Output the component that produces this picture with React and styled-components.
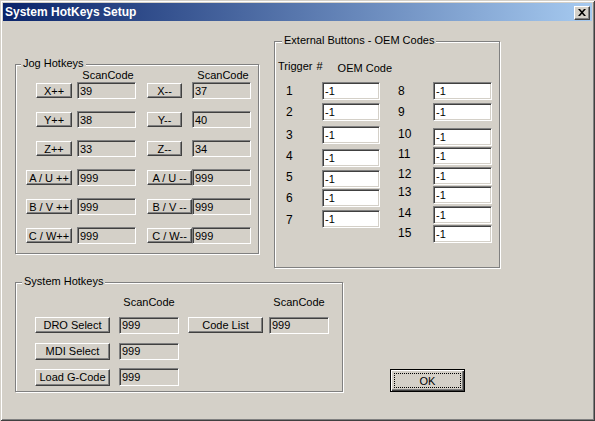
import React from "react";
import styled, { createGlobalStyle } from "styled-components";

const GlobalStyle = createGlobalStyle`
  html, body { margin: 0; padding: 0; background: #d4d0c8; }
  body { font-family: "Liberation Sans", Arial, sans-serif; font-size: 11px; color: #000; }
  * { box-sizing: border-box; }
`;

const Window = styled.div`
  width: 595px;
  height: 421px;
  padding: 3px;
  background: #d4d0c8;
  box-shadow: inset 1px 1px 0 #d4d0c8, inset -1px -1px 0 #404040,
    inset 2px 2px 0 #fff, inset -2px -2px 0 #808080;
  display: flex;
  flex-direction: column;
  overflow: hidden;
`;

const TitleBar = styled.div`
  height: 18px;
  flex-shrink: 0;
  display: flex;
  align-items: center;
  justify-content: space-between;
  padding: 0 2px;
  background: linear-gradient(to right, #0a246a, #a6caf0);
`;

const Title = styled.span`
  color: #fff;
  font-weight: bold;
  font-size: 12px;
  line-height: 18px;
`;

const raised = `
  background: #d4d0c8;
  border: 1px solid;
  border-color: #fff #404040 #404040 #fff;
  box-shadow: inset -1px -1px 0 #808080;
`;

const CloseBtn = styled.div`
  ${raised}
  width: 16px;
  height: 14px;
  margin-top: 1px;
  display: flex;
  align-items: center;
  justify-content: center;
  padding-bottom: 1px;
`;

const Body = styled.div`
  flex: 1;
  display: flex;
  flex-direction: column;
  padding-left: 12px;
`;

const Row = styled.div`
  display: flex;
  align-items: flex-start;
  margin-top: ${(p) => p.$mt || 0}px;
`;

const Group = styled.div`
  position: relative;
  width: ${(p) => p.$w}px;
  height: ${(p) => p.$h}px;
  margin-top: ${(p) => p.$mt || 0}px;
  margin-left: ${(p) => p.$ml || 0}px;
  border: 1px solid #808080;
  box-shadow: 1px 1px 0 #fff, inset 1px 1px 0 #fff;
`;

const JogGroup = styled(Group)`
  padding: 4px 0 0 10px;
`;

const ExtGroup = styled(Group)`
  padding: 18px 0 0 3px;
`;

const SysGroup = styled(Group)`
  padding: 13px 0 0 19px;
`;

const Legend = styled.span`
  position: absolute;
  top: -8px;
  left: ${(p) => p.$x}px;
  padding: 0 2px;
  background: #d4d0c8;
  line-height: 13px;
  white-space: nowrap;
`;

const Btn = styled.button`
  ${raised}
  font-family: "Liberation Sans", Arial, sans-serif;
  font-size: 11px;
  color: #000;
  padding: 0;
  margin: 0;
  white-space: nowrap;
  width: ${(p) => p.$w}px;
  height: ${(p) => p.$h}px;
  align-self: center;
`;

const JogBtn = styled(Btn)`
  justify-self: ${(p) => (p.$end ? "end" : "start")};
  margin-right: ${(p) => (p.$end ? 5 : 0)}px;
  line-height: 12px;
`;

const Field = styled.input`
  width: ${(p) => p.$w}px;
  height: ${(p) => p.$h}px;
  margin: 0;
  padding: 0 0 0 2px;
  font-family: "Liberation Sans", Arial, sans-serif;
  font-size: 11px;
  color: #000;
  background: ${(p) => (p.$white ? "#fff" : "#d4d0c8")};
  border: 1px solid;
  border-color: #808080 #fff #fff #808080;
  box-shadow: inset 1px 1px 0 #404040, inset -1px -1px 0 #d4d0c8;
  outline: none;
  align-self: center;
`;

const jogCols = "51px 70px 45px 59px";
const sysCols = "84px 69px 81px 60px";

const HeadGrid = styled.div`
  display: grid;
  grid-template-columns: ${(p) => p.$cols};
  height: 13px;
  line-height: 13px;
`;

const HeadCell = styled.span`
  grid-column: ${(p) => p.$col};
  width: ${(p) => p.$w}px;
  text-align: center;
  padding-left: ${(p) => p.$pl || 0}px;
`;

const RowsGrid = styled.div`
  display: grid;
  grid-template-columns: ${(p) => p.$cols};
  grid-auto-rows: ${(p) => p.$rh}px;
  row-gap: ${(p) => p.$gap}px;
  margin-top: ${(p) => p.$mt || 0}px;
`;

const ExtHead = styled.div`
  display: flex;
  align-items: flex-start;
  height: 13px;
  line-height: 13px;
`;

const ExtHeadText = styled.span`
  margin-left: ${(p) => p.$ml || 0}px;
  margin-top: ${(p) => p.$mt || 0}px;
  word-spacing: ${(p) => p.$ws || 0}px;
`;

const ExtCols = styled.div`
  display: flex;
  gap: 18px;
  margin-top: 9px;
  padding-left: 8px;
`;

const ExtCol = styled.div`
  display: flex;
  flex-direction: column;
`;

const ExtRow = styled.div`
  display: flex;
  align-items: center;
  margin-top: ${(p) => p.$gap}px;
`;

const NumLabel = styled.span`
  width: ${(p) => p.$w}px;
  font-size: 12px;
  line-height: 13px;
  transform: translateY(${(p) => p.$dy}px);
`;

const OkButton = styled.button`
  position: relative;
  width: 75px;
  height: 23px;
  margin-left: 47px;
  margin-top: 87px;
  padding: 0;
  background: #d4d0c8;
  border: 1px solid #000;
  box-shadow: inset 1px 1px 0 #fff, inset -1px -1px 0 #404040,
    inset -2px -2px 0 #808080;
  font-family: "Liberation Sans", Arial, sans-serif;
  font-size: 11px;
  color: #000;
  &::after {
    content: "";
    position: absolute;
    inset: 3px;
    border: 1px dotted #000;
  }
`;

const jogRows = [
  ["X++", 36, "39", "X--", 35, "37"],
  ["Y++", 36, "38", "Y--", 35, "40"],
  ["Z++", 36, "33", "Z--", 35, "34"],
  ["A / U ++", 46, "999", "A / U --", 45, "999"],
  ["B / V ++", 46, "999", "B / V --", 45, "999"],
  ["C / W++", 46, "999", "C / W--", 45, "999"],
];

const extCol1 = [
  ["1", 0, 0],
  ["2", 3, 0],
  ["3", 5, 0],
  ["4", 5, -2],
  ["5", 3, -2],
  ["6", 1, 0],
  ["7", 3, 1],
];

const extCol2 = [
  ["8", 0, 0],
  ["9", 3, 0],
  ["10", 7, -3],
  ["11", 1, -2],
  ["12", 2, -2],
  ["13", 1, -3],
  ["14", 2, -2],
  ["15", 1, -1],
];

export default function App() {
  return (
    <>
      <GlobalStyle />
      <Window>
        <TitleBar>
          <Title>System HotKeys Setup</Title>
          <CloseBtn>
            <svg width="8" height="7" viewBox="0 0 8 7">
              <path d="M0 0H2L4 2.3L6 0H8L5 3.5L8 7H6L4 4.7L2 7H0L3 3.5Z" fill="#000" />
            </svg>
          </CloseBtn>
        </TitleBar>
        <Body>
          <Row>
            <JogGroup $w={244} $h={190} $mt={43}>
              <Legend $x={5}>Jog Hotkeys</Legend>
              <HeadGrid $cols={jogCols}>
                <HeadCell $col={2} $w={59} $pl={3}>ScanCode</HeadCell>
                <HeadCell $col={4} $w={59} $pl={3}>ScanCode</HeadCell>
              </HeadGrid>
              <RowsGrid $cols={jogCols} $rh={17} $gap={12}>
                {jogRows.map(([a, aw, av, b, bw, bv]) => (
                  <React.Fragment key={a}>
                    <JogBtn $w={aw} $h={15} $end>{a}</JogBtn>
                    <Field $w={59} $h={17} readOnly value={av} />
                    <JogBtn $w={bw} $h={15}>{b}</JogBtn>
                    <Field $w={59} $h={17} readOnly value={bv} />
                  </React.Fragment>
                ))}
              </RowsGrid>
            </JogGroup>
            <ExtGroup $w={226} $h={227} $mt={20} $ml={15}>
              <Legend $x={7}>External Buttons - OEM Codes</Legend>
              <ExtHead>
                <ExtHeadText $ws={1}>Trigger #</ExtHeadText>
                <ExtHeadText $ml={15} $mt={2}>OEM Code</ExtHeadText>
              </ExtHead>
              <ExtCols>
                <ExtCol>
                  {extCol1.map(([n, gap, dy]) => (
                    <ExtRow key={n} $gap={gap}>
                      <NumLabel $w={36} $dy={dy}>{n}</NumLabel>
                      <Field $w={58} $h={18} $white readOnly value="-1" />
                    </ExtRow>
                  ))}
                </ExtCol>
                <ExtCol>
                  {extCol2.map(([n, gap, dy]) => (
                    <ExtRow key={n} $gap={gap}>
                      <NumLabel $w={35} $dy={dy}>{n}</NumLabel>
                      <Field $w={59} $h={18} $white readOnly value="-1" />
                    </ExtRow>
                  ))}
                </ExtCol>
              </ExtCols>
            </ExtGroup>
          </Row>
          <Row $mt={14}>
            <SysGroup $w={328} $h={110}>
              <Legend $x={6}>System Hotkeys</Legend>
              <HeadGrid $cols={sysCols}>
                <HeadCell $col={2} $w={60}>ScanCode</HeadCell>
                <HeadCell $col={4} $w={60}>ScanCode</HeadCell>
              </HeadGrid>
              <RowsGrid $cols={sysCols} $rh={18} $gap={8} $mt={7}>
                <Btn $w={75} $h={16}>DRO Select</Btn>
                <Field $w={60} $h={17} readOnly value="999" />
                <Btn $w={75} $h={16}>Code List</Btn>
                <Field $w={60} $h={17} readOnly value="999" />
                <Btn $w={75} $h={17}>MDI Select</Btn>
                <Field $w={60} $h={17} readOnly value="999" />
                <span />
                <span />
                <Btn $w={75} $h={17}>Load G-Code</Btn>
                <Field $w={60} $h={18} readOnly value="999" />
              </RowsGrid>
            </SysGroup>
            <OkButton>OK</OkButton>
          </Row>
        </Body>
      </Window>
    </>
  );
}
